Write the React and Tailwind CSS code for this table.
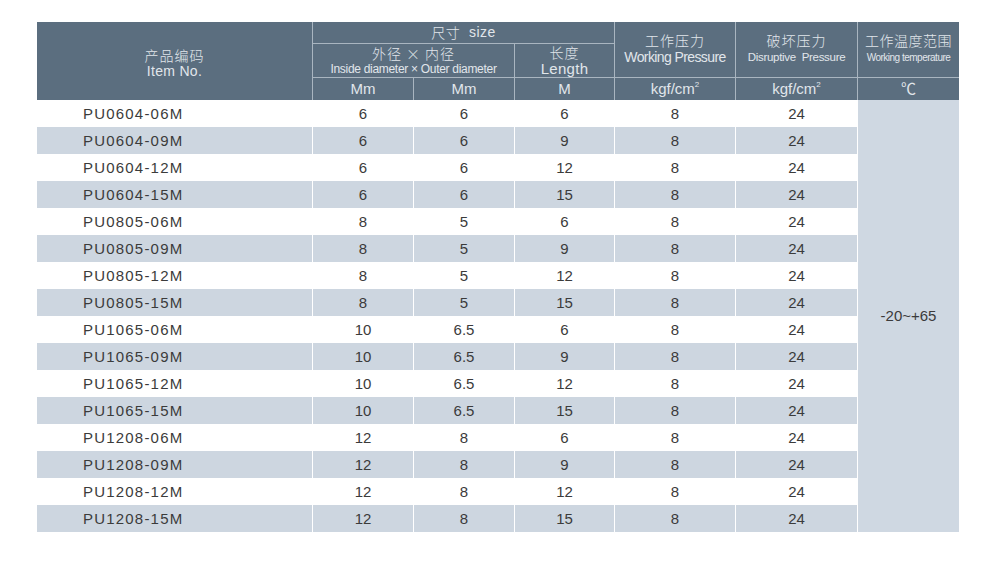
import React from "react";

const rows = [
  ["PU0604-06M", "6", "6", "6"],
  ["PU0604-09M", "6", "6", "9"],
  ["PU0604-12M", "6", "6", "12"],
  ["PU0604-15M", "6", "6", "15"],
  ["PU0805-06M", "8", "5", "6"],
  ["PU0805-09M", "8", "5", "9"],
  ["PU0805-12M", "8", "5", "12"],
  ["PU0805-15M", "8", "5", "15"],
  ["PU1065-06M", "10", "6.5", "6"],
  ["PU1065-09M", "10", "6.5", "9"],
  ["PU1065-12M", "10", "6.5", "12"],
  ["PU1065-15M", "10", "6.5", "15"],
  ["PU1208-06M", "12", "8", "6"],
  ["PU1208-09M", "12", "8", "9"],
  ["PU1208-12M", "12", "8", "12"],
  ["PU1208-15M", "12", "8", "15"],
];

const font = { fontFamily: '"Liberation Sans", "Noto Sans CJK SC", Arial, sans-serif' };
const cjk = { fontFamily: '"Noto Sans CJK SC", sans-serif' };

function Kgf() {
  return (
    <span className="text-[15px]">
      kgf/cm<sup className="text-[8px] relative -top-[7px] align-baseline">2</sup>
    </span>
  );
}

export default function App() {
  return (
    <div className="w-[1000px] h-[568px] bg-white pt-[22px] pl-[37px]" style={font}>
      {/* Header */}
      <div className="flex w-[922px] h-[78px] bg-[#5b6e7f] text-[#e1e6eb]">
        <div className="w-[276px] h-full border-r border-[#a9b5c0] flex flex-col items-center justify-center pt-[4px] leading-[16px]">
          <div className="text-[14px] tracking-[1px] font-light" style={cjk}>产品编码</div>
          <div className="text-[14px] tracking-[0.3px]">Item No.</div>
        </div>
        <div className="w-[302px] h-full border-r border-[#a9b5c0] flex flex-col">
          <div className="h-[22px] border-b border-[#a9b5c0] flex items-center justify-center text-[14px] tracking-[0.5px]">
            <span className="font-light" style={cjk}>尺寸</span>&nbsp;&nbsp;size
          </div>
          <div className="h-[34px] border-b border-[#a9b5c0] flex">
            <div className="w-[202px] border-r border-[#a9b5c0] flex flex-col items-center justify-center leading-[16px]">
              <div className="text-[14px] tracking-[1px] font-light" style={cjk}>外径 × 内径</div>
              <div className="text-[12px] tracking-[-0.3px] whitespace-nowrap">Inside diameter × Outer diameter</div>
            </div>
            <div className="flex-1 flex flex-col items-center justify-center">
              <div className="text-[14px] leading-[16px] tracking-[1px] font-light" style={cjk}>长度</div>
              <div className="text-[15px] leading-[17px] tracking-[0.3px]">Length</div>
            </div>
          </div>
          <div className="h-[22px] flex text-[15px]">
            <div className="w-[101px] border-r border-[#a9b5c0] flex items-center justify-center">Mm</div>
            <div className="w-[101px] border-r border-[#a9b5c0] flex items-center justify-center">Mm</div>
            <div className="flex-1 flex items-center justify-center">M</div>
          </div>
        </div>
        <div className="w-[121px] h-full border-r border-[#a9b5c0] flex flex-col">
          <div className="h-[56px] border-b border-[#a9b5c0] flex flex-col items-center justify-center leading-[17px]">
            <div className="text-[14px] tracking-[1px] font-light" style={cjk}>工作压力</div>
            <div className="text-[14px] tracking-[-0.6px] whitespace-nowrap">Working Pressure</div>
          </div>
          <div className="flex-1 flex items-center justify-center"><Kgf /></div>
        </div>
        <div className="w-[122px] h-full border-r border-[#a9b5c0] flex flex-col">
          <div className="h-[56px] border-b border-[#a9b5c0] flex flex-col items-center justify-center leading-[17px]">
            <div className="text-[14px] tracking-[1px] font-light" style={cjk}>破坏压力</div>
            <div className="text-[11.5px] tracking-[-0.3px] whitespace-nowrap">Disruptive&nbsp; Pressure</div>
          </div>
          <div className="flex-1 flex items-center justify-center"><Kgf /></div>
        </div>
        <div className="w-[101px] h-full flex flex-col">
          <div className="h-[56px] border-b border-[#a9b5c0] flex flex-col items-center justify-center leading-[17px]">
            <div className="text-[14px] tracking-[0.5px] font-light" style={cjk}>工作温度范围</div>
            <div className="text-[10px] tracking-[-0.5px] whitespace-nowrap">Working temperature</div>
          </div>
          <div className="flex-1 flex items-center justify-center text-[15px]">℃</div>
        </div>
      </div>

      {/* Body */}
      <div className="flex w-[922px] text-[#3b3b3b] text-[15px]">
        <div className="w-[821px] flex flex-col">
          {rows.map((r, i) => {
            const gray = i % 2 === 1;
            const cell = gray
              ? "bg-[#cdd6e0] border-r border-white flex items-center justify-center pt-[1px]"
              : "flex items-center justify-center border-r border-transparent pt-[1px]";
            return (
              <div key={i} className="grid grid-cols-[276px_101px_101px_100px_121px_122px] h-[27px]">
                <div className={cell + " !justify-start pl-[46px] tracking-[1.2px]"}>{r[0]}</div>
                <div className={cell}>{r[1]}</div>
                <div className={cell}>{r[2]}</div>
                <div className={cell}>{r[3]}</div>
                <div className={cell}>8</div>
                <div className={cell}>24</div>
              </div>
            );
          })}
        </div>
        <div className="w-[101px] bg-[#cfd8e2] flex items-center justify-center">
          -20~+65
        </div>
      </div>
    </div>
  );
}
